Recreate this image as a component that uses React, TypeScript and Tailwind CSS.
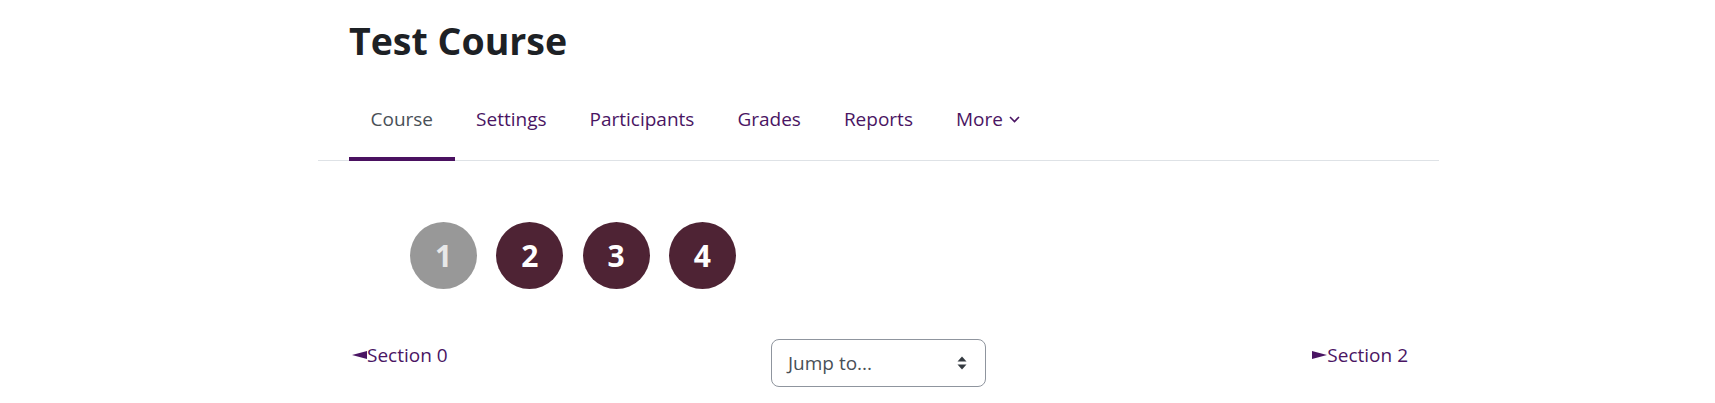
import React, { FC } from "react";

const tabs = ["Course", "Settings", "Participants", "Grades", "Reports"];

const App: FC = () => {
  return (
    <div className="w-[1715px] h-[403px] bg-white overflow-hidden font-['Open_Sans',sans-serif]">
      <div className="ml-[318px] w-[1121px]">
        <h1 className="px-[31px] pt-[18px] text-[37.5px] leading-[46px] font-bold text-[#1d2125]">Test Course</h1>

        <nav className="mt-[17px] border-b border-[#dee2e6]">
          <ul className="flex pl-[31px]">
            {tabs.map((t, i) => (
              <li key={t} className="-mb-px">
                <a
                  href="#"
                  className={
                    i === 0
                      ? "block px-[21.5px] pt-[24px] pb-[24px] border-b-4 border-[#4a1160] text-[19px] leading-[28px] text-[#495057]"
                      : "block px-[21.5px] pt-[24px] pb-[24px] border-b-4 border-transparent text-[19px] leading-[28px] text-[#4a1563]"
                  }
                >
                  {t}
                </a>
              </li>
            ))}
            <li className="-mb-px">
              <a href="#" className="flex items-center gap-[6px] px-[21.5px] pt-[24px] pb-[24px] border-b-4 border-transparent text-[19px] leading-[28px] text-[#4a1563]">
                More
                <svg width="11" height="7" viewBox="0 0 11 7" className="mt-[1px]">
                  <path d="M1 1l4.5 4.5L10 1" fill="none" stroke="#4a1563" strokeWidth="1.6" />
                </svg>
              </a>
            </li>
          </ul>
        </nav>

        <div className="px-[31px]">
          <div className="mt-[61px] ml-[61px] flex gap-[19.3px]">
            <div className="w-[67px] h-[67px] rounded-full bg-[#989898] flex items-center justify-center text-[30px] font-bold leading-none text-[#e8e8e8]">1</div>
            <div className="w-[67px] h-[67px] rounded-full bg-[#4e2334] flex items-center justify-center text-[30px] font-bold leading-none text-white">2</div>
            <div className="w-[67px] h-[67px] rounded-full bg-[#4e2334] flex items-center justify-center text-[30px] font-bold leading-none text-white">3</div>
            <div className="w-[67px] h-[67px] rounded-full bg-[#4e2334] flex items-center justify-center text-[30px] font-bold leading-none text-white">4</div>
          </div>

          <div className="mt-[50px] grid grid-cols-3 items-start">
            <div className="flex justify-start pt-[2px]">
              <a href="#" className="flex items-center text-[19px] leading-[28px] text-[#4a1563]">
                <svg width="15" height="8" viewBox="0 0 15 8" className="ml-[3px] mt-[-1px]">
                  <polygon points="0,4 15,0 15,8" fill="#4a1563" />
                </svg>
                Section 0
              </a>
            </div>
            <div className="flex justify-center">
              <div className="w-[215px] h-[48px] border border-[#8f959e] rounded-[8px] flex items-center justify-between pl-[16px] pr-[18px] text-[19px] text-[#495057]">
                <span>Jump to...</span>
                <svg width="10" height="14" viewBox="0 0 10 14">
                  <polygon points="0.5,5.5 5,0.5 9.5,5.5" fill="#343a40" />
                  <polygon points="0.5,8.5 5,13.5 9.5,8.5" fill="#343a40" />
                </svg>
              </div>
            </div>
            <div className="flex justify-end pt-[2px]">
              <a href="#" className="flex items-center text-[19px] leading-[28px] text-[#4a1563]">
                <svg width="15" height="8" viewBox="0 0 15 8" className="mt-[-1px]">
                  <polygon points="0,0 15,4 0,8" fill="#4a1563" />
                </svg>
                Section 2
              </a>
            </div>
          </div>
        </div>
      </div>
    </div>
  );
};

export default App;
